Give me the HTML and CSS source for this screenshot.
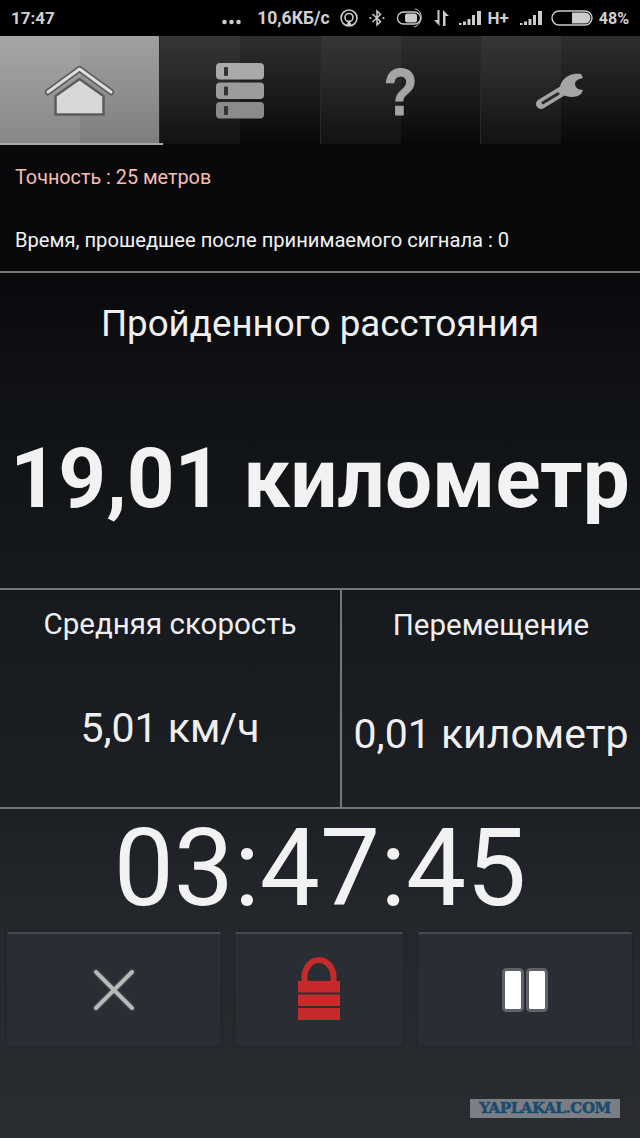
FILE: index.html
```html
<!DOCTYPE html>
<html lang="ru">
<head>
<meta charset="utf-8">
<title>Трекер</title>
<link rel="stylesheet" href="styles.css">
</head>
<body>
<div class="screen">
  <header class="status">
    <span class="clock">17:47</span>
    <div class="status-right">
      <svg class="si" width="19" height="18" viewBox="0 0 19 18"><circle cx="2.500" cy="13" r="2.300" fill="#ccc"/><circle cx="9.500" cy="13" r="2.300" fill="#ccc"/><circle cx="16.500" cy="13" r="2.300" fill="#ccc"/></svg>
      <span class="speed">10,6КБ/с</span>
      <svg class="si m10" width="18" height="18" viewBox="0 0 18 18"><circle cx="9" cy="9" r="8" fill="none" stroke="#ccc" stroke-width="1.600"/><circle cx="9" cy="8.500" r="4" fill="none" stroke="#ccc" stroke-width="1.600"/><path d="M9 11l3 5.500H6z" fill="#ccc"/></svg>
      <svg class="si m11" width="16" height="18" viewBox="0 0 16 18"><path d="M3.500 5l8 7.500L8 16V2l3.500 3.500-8 7.500" fill="none" stroke="#ccc" stroke-width="1.500"/><circle cx="1.300" cy="9" r="1.100" fill="#ccc"/><circle cx="14.500" cy="9" r="1.100" fill="#ccc"/></svg>
      <svg class="si m11" width="28" height="20" viewBox="0 0 28 20"><rect x="1.500" y="4" width="23" height="12" rx="6" fill="none" stroke="#ccc" stroke-width="1.300"/><rect x="9" y="5.500" width="12" height="9" rx="2.500" fill="#ccc"/><path d="M19 1c8 1 9 15-1 18" fill="none" stroke="#ccc" stroke-width="1"/></svg>
      <svg class="si m10" width="15" height="18" viewBox="0 0 15 18"><path d="M5.500 1v16L0 11h3.500V1zM9 17V1l6 6h-3.500v10z" fill="#ccc"/></svg>
      <svg class="si m10" width="22" height="16" viewBox="0 0 22 16"><path d="M0 13h2.500v2H0zM4 11.500h3V15H4zM8.500 9h3v6h-3zM13 5h3v10h-3zM18 1h4v14h-4z" fill="#ccc"/></svg>
      <span class="net">H+</span>
      <svg class="si m11" width="22" height="16" viewBox="0 0 22 16"><path d="M0 13h2.500v2H0zM4 11.500h3V15H4zM8.500 9h3v6h-3zM13 5h3v10h-3zM18 1h4v14h-4z" fill="#ccc"/></svg>
      <svg class="si m9" width="42" height="16" viewBox="0 0 42 16"><rect x="1" y="1" width="40" height="14" rx="7" fill="none" stroke="#ccc" stroke-width="1.400"/><path d="M21 2.500h13a5.500 5.500 0 0 1 0 11H21z" fill="#ccc"/></svg>
      <span class="pct">48%</span>
    </div>
  </header>

  <nav class="tabs">
    <div class="tab active">
      <svg width="72" height="54" viewBox="0 0 72 54"><path d="M11.500 32L35.500 15l24 17v18.500h-48z" fill="#d8d8d8" stroke="#5c5c5c" stroke-width="2.500" stroke-linejoin="round"/><path d="M4 28L35.500 5 67 28" fill="none" stroke="#5c5c5c" stroke-width="6.500" stroke-linecap="round" stroke-linejoin="round"/><path d="M4 28L35.500 5 67 28" fill="none" stroke="#dedede" stroke-width="3" stroke-linecap="round" stroke-linejoin="round"/></svg>
    </div>
    <div class="tab">
      <svg width="50" height="56" viewBox="0 0 50 56"><rect x="1" y="0" width="48" height="16.500" rx="4" fill="#a9a9a9"/><rect x="1" y="19.500" width="48" height="16.500" rx="4" fill="#9c9c9c"/><rect x="1" y="39" width="48" height="16.500" rx="4" fill="#8b8b8b"/><rect x="9" y="4" width="4" height="9" rx="1" fill="#333"/><rect x="9" y="23.500" width="4" height="9" rx="1" fill="#333"/><rect x="9" y="43" width="4" height="9" rx="1" fill="#333"/></svg>
    </div>
    <div class="tab">
      <span class="q">?</span>
    </div>
    <div class="tab">
      <svg width="52" height="40" viewBox="0 0 52 40"><path d="M7 33L30 19" stroke="#a5a5a5" stroke-width="10" stroke-linecap="round"/><path d="M9 31.800l15-9" stroke="#2a2a2a" stroke-width="3" stroke-linecap="round"/><path d="M26 22C24 10 34 1 47 3l2 4C44 8 41 10 41 13c0 3 3 6 8 6l-2 4c-5 4-14 4-21-1z" fill="#a5a5a5"/></svg>
    </div>
  </nav>

  <section class="info">
    <p class="accuracy">Точность : 25 метров</p>
    <p class="elapsed">Время, прошедшее после принимаемого сигнала : 0</p>
  </section>

  <section class="distance">
    <h2 class="distance-title">Пройденного расстояния</h2>
    <div class="distance-value">19,01 километр</div>
  </section>

  <section class="pair">
    <div class="cell cell-speed">
      <div class="cell-title">Средняя скорость</div>
      <div class="cell-value">5,01 км/ч</div>
    </div>
    <div class="cell cell-move">
      <div class="cell-title">Перемещение</div>
      <div class="cell-value">0,01 километр</div>
    </div>
  </section>

  <div class="timer">03:47:45</div>

  <section class="buttons">
    <button class="btn" type="button">
      <svg width="50" height="50" viewBox="0 0 50 50"><path d="M7 7l36 36M43 7L7 43" stroke="#3a3d41" stroke-width="7" stroke-linecap="round"/><path d="M7 7l36 36M43 7L7 43" stroke="#b9b9b9" stroke-width="4" stroke-linecap="round"/></svg>
    </button>
    <button class="btn btn-lock" type="button">
      <svg width="42" height="63" viewBox="0 0 42 63"><path d="M6.500 25V20a14.500 17 0 0 1 29 0v5" fill="none" stroke="#c62a2a" stroke-width="6"/><path d="M0 24h42v11.500H0zM0 37.500h42V49H0zM0 51h42v12H0z" fill="#c62a2a"/></svg>
    </button>
    <button class="btn btn-pause" type="button">
      <svg width="46" height="44" viewBox="0 0 46 44"><rect x="1.500" y="1.500" width="19" height="41" rx="3" fill="#fff" stroke="#5f6367" stroke-width="3"/><rect x="25.500" y="1.500" width="19" height="41" rx="3" fill="#fff" stroke="#5f6367" stroke-width="3"/></svg>
    </button>
  </section>

  <div class="watermark">YAPLAKAL.COM</div>
</div>
</body>
</html>
```
FILE: styles.css
```css
* { box-sizing: border-box; }
html, body { margin: 0; padding: 0; }
body { background: #272a2f; font-family: Roboto, "Noto Sans", sans-serif; color: #f0f0f0; }
.screen {
  position: relative;
  width: 640px;
  height: 1138px;
  overflow: hidden;
  display: flex;
  flex-direction: column;
  background: linear-gradient(#08080a 150px, #08090b 270px, #0f1114 380px, #16191d 600px, #1c1f23 800px, #24272c 930px, #292c31 1138px);
}
.status {
  height: 36px;
  flex: none;
  background: #000;
  display: flex;
  align-items: center;
  justify-content: space-between;
  padding: 0 11px;
  color: #d0d0d0;
  font-weight: 700;
  font-size: 17px;
}
.status-right { display: flex; align-items: center; }
.si { display: block; flex: none; }
.speed { margin-left: 16px; font-size: 17.500px; }
.m11 { margin-left: 11px; }
.m10 { margin-left: 10px; }
.m9 { margin-left: 9px; }
.net { margin-left: 7px; font-size: 17px; }
.pct { margin-left: 6px; font-size: 16px; }
.tabs { display: flex; height: 108px; flex: none; }
.tab {
  flex: 1;
  display: flex;
  align-items: center;
  justify-content: center;
  padding-top: 2px;
  border-left: 1px solid #282828;
  background:
    linear-gradient(90deg, rgba(255,255,255,.04) 50%, rgba(255,255,255,0) 50%),
    linear-gradient(#2e2e2e, #1c1c1c 50%, #080809 100%);
}
.tab.active {
  position: relative;
  border-left: 0;
  background:
    linear-gradient(90deg, rgba(255,255,255,.07) 50%, rgba(255,255,255,0) 50%),
    linear-gradient(#a0a0a0, #7e7e7e);
}
.tab.active::after {
  content: "";
  position: absolute;
  left: 0;
  bottom: -1px;
  width: 163px;
  height: 2px;
  background: #a8a8a8;
}
.q { font-size: 67px; font-weight: 700; color: #a5a5a5; line-height: 1; font-family: "Liberation Sans", sans-serif; -webkit-text-stroke: 1px #a5a5a5; transform: scaleX(.82); }
.info { height: 129px; flex: none; padding: 0 15px; border-bottom: 2px solid #777; }
.info p { margin: 0; }
.accuracy { color: #f6bdb5; font-size: 19.800px; padding-top: 23px; line-height: 22px; }
.elapsed { color: #f2f2f2; font-size: 20.150px; padding-top: 40px; line-height: 22px; }
.distance { height: 317px; flex: none; border-bottom: 2px solid #777; text-align: center; }
.distance-title { margin: 0; font-weight: 400; font-size: 36.700px; line-height: 40px; padding-top: 31px; color: #f0f0f0; }
.distance-value { font-weight: 700; font-size: 83.500px; line-height: 94px; padding-top: 88px; white-space: nowrap; color: #f2f2f2; }
.pair { height: 219px; flex: none; display: flex; border-bottom: 2px solid #777; }
.cell { text-align: center; }
.cell-speed { width: 342px; border-right: 2px solid #777; }
.cell-move { flex: 1; }
.cell-title { font-size: 29.500px; line-height: 34px; color: #efefef; }
.cell-speed .cell-title { padding-top: 17px; }
.cell-move .cell-title { padding-top: 18px; }
.cell-value { font-size: 41px; line-height: 46px; color: #efefef; white-space: nowrap; }
.cell-speed .cell-value { padding-top: 64px; }
.cell-move .cell-value { padding-top: 69px; }
.timer { height: 123px; flex: none; text-align: center; font-size: 107px; line-height: 120px; color: #f2f2f2; font-weight: 400; }
.buttons { display: grid; grid-template-columns: 214px 168px 215px; gap: 14px; padding: 0 7px; height: 114px; flex: none; }
.btn {
  border: 0;
  border-top: 2px solid #474a4e;
  border-radius: 2px;
  background: #2a2d33;
  box-shadow: 0 0 2px #1b1d21;
  display: flex;
  align-items: center;
  justify-content: center;
  padding: 0;
}
.btn-lock { padding-bottom: 3px; }
.btn-pause { margin-left: 1px; }
.watermark {
  position: absolute;
  left: 470px;
  top: 1099px;
  width: 150px;
  height: 19px;
  background: #7b7f85;
  color: #1a4a6d;
  font: 700 15px/19px "DejaVu Serif", serif;
  -webkit-text-stroke: .5px #1a4a6d;
  text-align: center;
  letter-spacing: -0.4px;
  white-space: nowrap;
}
```
